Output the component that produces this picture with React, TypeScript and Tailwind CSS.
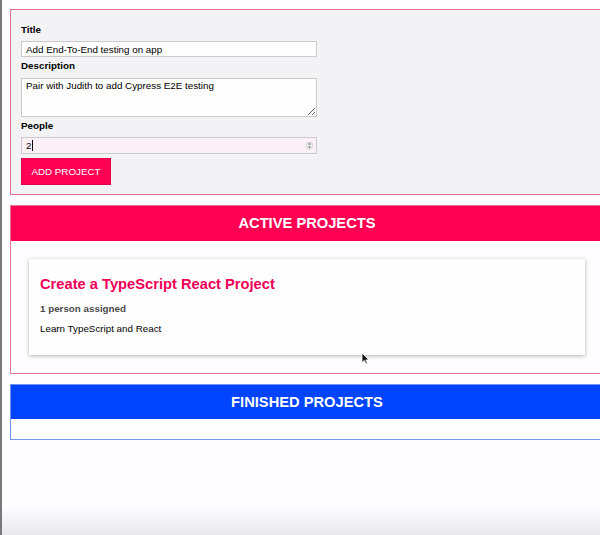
import React from "react";

export default function App() {
  const font = { fontFamily: '"Liberation Sans", Arial, Helvetica, sans-serif' };
  return (
    <div
      className="relative flex h-[535px] w-[600px] flex-col overflow-hidden border-l-2 border-[#77777d] bg-[#fdfcfe] pl-[8px] pt-[9px] text-black"
      style={font}
    >
      {/* Form */}
      <form className="flex w-[594px] shrink-0 flex-col items-start border border-[#e0708e] bg-[#f3f2f4] pb-[9px] pl-[10px] pt-[14px]">
        <label className="block text-[9.8px] font-bold leading-[12px] mb-[5px]">Title</label>
        <input
          type="text"
          defaultValue="Add End-To-End testing on app"
          className="block h-[16px] w-[296px] border border-[#cac9cc] bg-[#fefefe] px-[4px] text-[9.8px] leading-[12px] outline-none"
          style={font}
        />
        <label className="mt-[3px] mb-[6px] block text-[9.8px] font-bold leading-[12px]">Description</label>
        <textarea
          defaultValue="Pair with Judith to add Cypress E2E testing"
          className="block h-[39px] w-[296px] resize-y border border-[#cac9cc] bg-[#fefefe] px-[4px] py-[1px] text-[9.8px] leading-[12px] outline-none"
          style={font}
        />
        <label className="mt-[3px] mb-[5px] block text-[9.8px] font-bold leading-[12px]">People</label>
        <div className="relative h-[17px] w-[296px]">
          <input
            type="text"
            defaultValue="2"
            className="block h-[17px] w-[296px] border border-[#cac9cc] bg-[#fcf0f7] px-[4px] text-[9.8px] leading-[12px] outline-none"
            style={font}
          />
          <span className="absolute left-[11px] top-[3px] h-[11px] w-px bg-black" />
          <svg className="absolute right-[4px] top-[3px]" width="7" height="11" viewBox="0 0 7 11">
            <circle cx="3.5" cy="5.5" r="3.3" fill="#f2f2f2" stroke="#bbb" strokeWidth="0.6" />
            <path d="M2 4.6 L3.5 2.9 L5 4.6 Z" fill="#555" />
            <path d="M2 6.4 L3.5 8.1 L5 6.4 Z" fill="#555" />
          </svg>
        </div>
        <button
          type="button"
          className="mt-[4px] h-[27px] w-[90px] border border-[#e0004a] bg-[#ff0055] text-[9.8px] uppercase leading-[12px] text-white"
          style={font}
        >
          Add Project
        </button>
      </form>

      {/* Active projects */}
      <section className="mt-[10px] flex w-[594px] shrink-0 flex-col border border-[#e57693] bg-[#fdfcfe]">
        <header className="flex h-[35px] items-center justify-center bg-[#ff0052]">
          <h2 className="text-[14.7px] font-bold text-white">ACTIVE PROJECTS</h2>
        </header>
        <ul className="mx-[18px] my-[18px]">
          <li className="h-[96px] bg-[#fefefe] px-[11px] pt-[16px] shadow-[0_1px_4px_rgba(0,0,0,0.3)]">
            <h2 className="text-[14.7px] font-bold leading-[18px] text-[#ee0058]">
              Create a TypeScript React Project
            </h2>
            <h3 className="mt-[10px] text-[9.8px] font-bold leading-[12px] text-[#4a4a4a]">1 person assigned</h3>
            <p className="mt-[8px] text-[9.8px] leading-[12px] text-black">Learn TypeScript and React</p>
          </li>
        </ul>
      </section>

      {/* Finished projects */}
      <section className="mt-[10px] flex w-[594px] shrink-0 flex-col border border-[#7292f0] bg-[#fefeff]">
        <header className="flex h-[34px] items-center justify-center bg-[#0044ff]">
          <h2 className="text-[14.7px] font-bold text-white">FINISHED PROJECTS</h2>
        </header>
        <ul className="h-[20px]" />
      </section>

      <div className="flex-1" />
      <div className="-ml-[10px] h-[28px] w-[600px] shrink-0 bg-gradient-to-b from-[#fdfcfe00] to-[#e8e8ea]" />

      {/* Mouse cursor */}
      <svg className="absolute left-[359px] top-[352px]" width="9" height="13" viewBox="0 0 9 13">
        <path d="M1 1 L1 10.5 L3.3 8.4 L5 12 L6.4 11.3 L4.8 7.9 L7.8 7.9 Z" fill="#111" stroke="#fff" strokeWidth="0.8" />
      </svg>
    </div>
  );
}
